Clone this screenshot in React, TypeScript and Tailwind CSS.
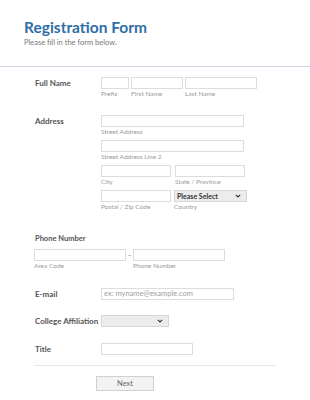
import { ReactNode } from "react";

const Box = ({ w, placeholder }: { w: string; placeholder?: string }) => (
  <div
    className={`${w} h-[12px] border border-[#dcdcdc] bg-white flex items-center px-[2px] text-[7.5px] text-[#a0a0a0] leading-none`}
  >
    {placeholder}
  </div>
);

const Sub = ({ children }: { children: ReactNode }) => (
  <div className="text-[6.5px] leading-[8px] text-[#9a9a9a] mt-[1px]">{children}</div>
);

const Field = ({ w, sub }: { w: string; sub: string }) => (
  <div className="flex flex-col">
    <Box w={w} />
    <Sub>{sub}</Sub>
  </div>
);

const Select = ({ w, text }: { w: string; text?: string }) => (
  <div
    className={`${w} h-[12px] border border-[#d6d6d6] bg-[#ececec] flex items-center justify-between px-[2px] text-[7px] font-bold text-[#333] leading-none`}
  >
    <span>{text}</span>
    <svg width="6" height="4" viewBox="0 0 6 4" className="mr-[3px]">
      <path d="M0.8 0.8 L3 3 L5.2 0.8" stroke="#333" strokeWidth="1.1" fill="none" />
    </svg>
  </div>
);

const Label = ({ children }: { children: ReactNode }) => (
  <div className="w-[66px] shrink-0 text-[8px] font-bold text-[#555] leading-[12px]">{children}</div>
);

const App = () => {
  return (
    <div
      className="w-[310px] h-[400px] bg-white overflow-hidden"
      style={{ fontFamily: "Lato, 'Open Sans', sans-serif" }}
    >
      {/* header */}
      <div className="px-[24px] pt-[18px] pb-[18px]">
        <h1 className="text-[15.5px] font-bold text-[#2f6ea8] leading-[19px]">Registration Form</h1>
        <p className="text-[7.5px] text-[#777] leading-[10px] mt-[1px]">Please fill in the form below.</p>
      </div>
      <div className="border-t border-[#c9d5e3]" />

      <div className="pl-[35px] pt-[10px]">
        {/* full name */}
        <div className="flex">
          <Label>Full Name</Label>
          <div className="flex gap-[2px]">
            <Field w="w-[28px]" sub="Prefix" />
            <Field w="w-[52px]" sub="First Name" />
            <Field w="w-[72px]" sub="Last Name" />
          </div>
        </div>

        {/* address */}
        <div className="flex mt-[17px]">
          <Label>Address</Label>
          <div className="flex flex-col gap-[4px]">
            <Field w="w-[143px]" sub="Street Address" />
            <Field w="w-[143px]" sub="Street Address Line 2" />
            <div className="flex gap-[4px]">
              <Field w="w-[70px]" sub="City" />
              <Field w="w-[70px]" sub="State / Province" />
            </div>
            <div className="flex gap-[3px]">
              <Field w="w-[70px]" sub="Postal / Zip Code" />
              <div className="flex flex-col">
                <Select w="w-[73px]" text="Please Select" />
                <Sub>Country</Sub>
              </div>
            </div>
          </div>
        </div>

        {/* phone */}
        <div className="mt-[23px] text-[7.5px] font-bold text-[#555] leading-[10px]">Phone Number</div>
        <div className="flex items-start mt-[5px] -ml-[1px]">
          <Field w="w-[92px]" sub="Area Code" />
          <span className="w-[7px] text-center text-[7px] text-[#666] leading-[12px]">-</span>
          <Field w="w-[92px]" sub="Phone Number" />
        </div>

        {/* email */}
        <div className="flex mt-[18px]">
          <Label>E-mail</Label>
          <Box w="w-[133px]" placeholder="ex: myname@example.com" />
        </div>

        {/* college */}
        <div className="flex mt-[15px]">
          <Label>College Affiliation</Label>
          <Select w="w-[68px]" />
        </div>

        {/* title */}
        <div className="flex mt-[16px]">
          <Label>Title</Label>
          <Box w="w-[92px]" />
        </div>

        <div className="w-[242px] -ml-[1px] border-t border-[#e6e6e6] mt-[10px]" />

        <div className="pl-[61px] mt-[10px]">
          <div className="w-[58px] h-[15px] border border-[#d0d0d0] bg-[#f3f3f3] flex items-center justify-center text-[7.5px] text-[#666]">
            Next
          </div>
        </div>
      </div>
    </div>
  );
};

export default App;
